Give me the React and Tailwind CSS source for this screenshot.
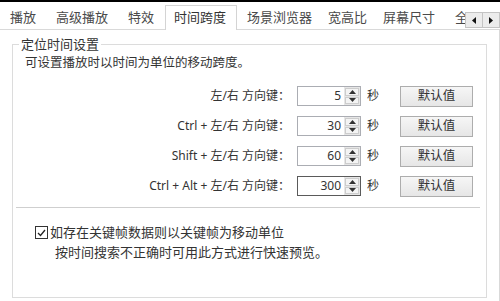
import React from "react";

const tabs = [
  { t: "播放", w: 46 },
  { t: "高级播放", w: 72 },
  { t: "特效", w: 47 },
  { t: "时间跨度", w: 72, sel: true },
  { t: "场景浏览器", w: 81 },
  { t: "宽高比", w: 55 },
  { t: "屏幕尺寸", w: 72 },
  { t: "全", w: 30 },
];

const rows = [
  { label: "左/右 方向键：", v: "5" },
  { label: "Ctrl + 左/右 方向键：", v: "30" },
  { label: "Shift + 左/右 方向键：", v: "60" },
  { label: "Ctrl + Alt + 左/右 方向键：", v: "300", focus: true },
];

function Spin({ v, focus }) {
  return (
    <div
      className={`flex h-[20px] w-[64px] border bg-white ${
        focus ? "border-[#5a5a5a]" : "border-[#abadb3]"
      }`}
    >
      <div className="flex flex-1 items-center justify-end pr-[3px] text-[12px] leading-none text-[#333]">
        {v}
      </div>
      <div className="flex w-[16px] flex-col gap-[1px] bg-[#e6e6e6] p-[1px]">
        <div className="flex flex-1 items-center justify-center border border-[#cdcdcd] bg-[#f4f4f4]">
          <svg width="7" height="4" viewBox="0 0 7 4">
            <path d="M0 4 L3.5 0 L7 4 Z" fill="#333" />
          </svg>
        </div>
        <div className="flex flex-1 items-center justify-center border border-[#cdcdcd] bg-[#f4f4f4]">
          <svg width="7" height="4" viewBox="0 0 7 4">
            <path d="M0 0 L3.5 4 L7 0 Z" fill="#333" />
          </svg>
        </div>
      </div>
    </div>
  );
}

export default function App() {
  return (
    <div
      className="relative h-[301px] w-[500px] overflow-hidden bg-white text-[#333]"
      style={{ fontFamily: '"Noto Sans", "Noto Sans CJK SC", sans-serif' }}
    >
      <div className="h-[2px] bg-black" />
      <div className="relative flex h-[27px] items-end">
        {tabs.map((tab) =>
          tab.sel ? (
            <div
              key={tab.t}
              className="relative z-10 -mb-[1px] flex h-[25px] items-center border border-b-0 border-[#d4d4d4] bg-white pl-[8px] text-[13px] text-[#333]"
              style={{ width: tab.w }}
            >
              {tab.t}
            </div>
          ) : (
            <div
              key={tab.t}
              className="flex h-[23px] items-center pl-[10px] text-[13px] text-[#4a4a4a]"
              style={{ width: tab.w }}
            >
              {tab.t}
            </div>
          )
        )}
        <div className="absolute right-0 top-[10px] flex h-[16px]">
          <div className="flex w-[18px] items-center justify-center border border-[#c4c4c4] bg-[#ececec]">
            <svg width="4" height="7" viewBox="0 0 4 7">
              <path d="M4 0 L0 3.5 L4 7 Z" fill="#111" />
            </svg>
          </div>
          <div className="-ml-[1px] flex w-[18px] items-center justify-center border border-[#c4c4c4] bg-[#ececec]">
            <svg width="4" height="7" viewBox="0 0 4 7">
              <path d="M0 0 L4 3.5 L0 7 Z" fill="#111" />
            </svg>
          </div>
        </div>
      </div>
      <div className="h-[272px] border-r border-t border-[#d9d9d9] pl-[12px] pr-[12px] pt-[14px]">
        <div className="relative h-[254px] border border-[#dcdcdc]">
          <div className="absolute -top-[10px] left-[6px] bg-white px-[2px] text-[13px] leading-[18px] text-[#333]">
            定位时间设置
          </div>
          <div className="pl-[12px] pt-[9px] text-[12.5px] leading-[17px] text-[#333]">
            可设置播放时以时间为单位的移动跨度。
          </div>
          <div className="mt-[15px] flex flex-col gap-[10px]">
            {rows.map((r) => (
              <div key={r.v} className="flex h-[20px] items-center">
                <div className="w-[277px] text-right text-[12px] leading-none text-[#333]">
                  {r.label}
                </div>
                <div className="ml-[7px]">
                  <Spin v={r.v} focus={r.focus} />
                </div>
                <div className="ml-[6px] text-[12px] leading-none text-[#333]">秒</div>
                <div className="ml-[21px] flex h-[21px] w-[73px] items-center justify-center border border-[#adadad] bg-gradient-to-b from-[#f6f6f6] to-[#e6e6e6] text-[12.5px] text-[#333]">
                  默认值
                </div>
              </div>
            ))}
          </div>
          <div className="ml-[3px] mr-[6px] mt-[11px] h-[1px] bg-[#cfcfcf]" />
          <div className="mt-[16px] flex items-center pl-[22px]">
            <div className="flex h-[13px] w-[13px] items-center justify-center border border-[#333] bg-white">
              <svg width="9" height="8" viewBox="0 0 9 8">
                <path d="M1 4 L3.5 6.5 L8 1" fill="none" stroke="#222" strokeWidth="1.3" />
              </svg>
            </div>
            <div className="ml-[2px] text-[13px] leading-[17px] text-[#333]">
              如存在关键帧数据则以关键帧为移动单位
            </div>
          </div>
          <div className="mt-[3px] pl-[42px] text-[13px] leading-[17px] text-[#333]">
            按时间搜索不正确时可用此方式进行快速预览。
          </div>
        </div>
      </div>
    </div>
  );
}
